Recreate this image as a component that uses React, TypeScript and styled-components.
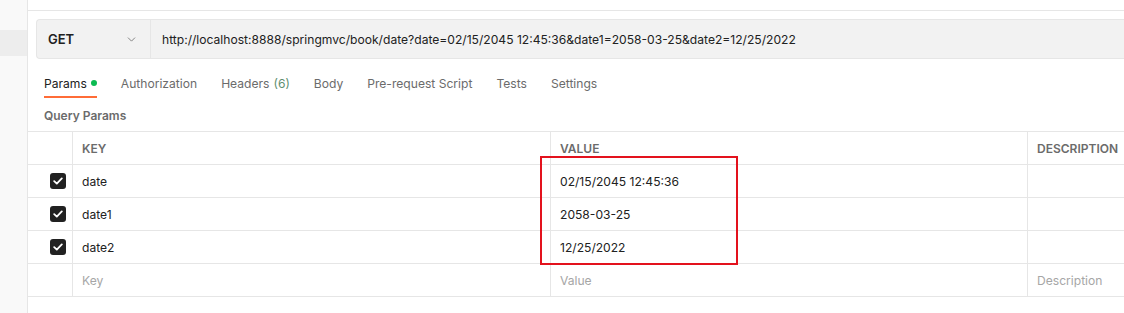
import React from 'react';
import styled, { createGlobalStyle } from 'styled-components';
import { ChevronDown } from 'lucide-react';

const GlobalStyle = createGlobalStyle`
  html, body {
    margin: 0;
    padding: 0;
    background: #fff;
  }
  body {
    font-family: Inter, "Noto Sans", "Liberation Sans", sans-serif;
    font-size: 13px;
    color: #212121;
    overflow: hidden;
  }
`;

const Page = styled.div`
  display: flex;
  width: 1124px;
  height: 313px;
  overflow: hidden;
`;

const Sidebar = styled.div`
  width: 27px;
  flex-shrink: 0;
  background: #f9f9f9;
  border-right: 1px solid #e6e6e6;
  padding-top: 30px;
  box-sizing: content-box;
`;

const SidebarItem = styled.div<{ $active?: boolean }>`
  height: 26px;
  background: ${p => (p.$active ? '#ededed' : 'transparent')};
`;

const Main = styled.div`
  flex: 1;
  min-width: 0;
  position: relative;
`;

const TopStrip = styled.div`
  height: 10px;
  border-bottom: 1px solid #e6e6e6;
`;

const UrlBar = styled.div`
  display: flex;
  height: 38px;
  margin: 8px 0 0 8px;
  background: #f2f2f2;
  border: 1px solid #e6e6e6;
  border-right: none;
  border-radius: 4px 0 0 4px;
`;

const Method = styled.div`
  width: 114px;
  display: flex;
  align-items: center;
  justify-content: space-between;
  padding: 0 12px 0 11px;
  box-sizing: border-box;
  border-right: 1px solid #e6e6e6;
  font-weight: 600;
  font-size: 13px;
  color: #212121;
  svg {
    color: #6b6b6b;
  }
`;

const UrlText = styled.div`
  display: flex;
  align-items: center;
  padding-left: 11px;
  font-size: 12.1px;
  color: #212121;
  white-space: nowrap;
`;

const Tabs = styled.div`
  display: flex;
  gap: 24px;
  margin: 11px 0 0 16px;
`;

const Tab = styled.div<{ $active?: boolean }>`
  display: flex;
  align-items: center;
  gap: 4px;
  height: 26px;
  font-size: 12.1px;
  color: ${p => (p.$active ? '#212121' : '#6b6b6b')};
  border-bottom: 2px solid ${p => (p.$active ? '#ff6c37' : 'transparent')};
`;

const Dot = styled.span`
  width: 6px;
  height: 6px;
  border-radius: 50%;
  background: #0cbb52;
`;

const Counter = styled.span`
  color: #5f8f6f;
`;

const SectionTitle = styled.div`
  margin: 10px 0 0 16px;
  height: 23px;
  font-size: 12px;
  font-weight: 600;
  color: #6b6b6b;
`;

const Table = styled.div`
  display: grid;
  grid-template-columns: 44px 478px 477px 1fr;
  border-top: 1px solid #e6e6e6;
`;

const Cell = styled.div<{ $head?: boolean; $placeholder?: boolean; $divider?: boolean }>`
  height: 32px;
  display: flex;
  align-items: center;
  padding-left: 9px;
  border-bottom: 1px solid #e6e6e6;
  border-left: ${p => (p.$divider ? '1px solid #e6e6e6' : 'none')};
  font-size: ${p => (p.$head ? '12px' : '12.1px')};
  font-weight: ${p => (p.$head ? 600 : 400)};
  color: ${p => (p.$head ? '#6b6b6b' : p.$placeholder ? '#a6a6a6' : '#212121')};
  white-space: nowrap;
  overflow: hidden;
`;

const CheckCell = styled.div`
  height: 32px;
  display: flex;
  align-items: center;
  justify-content: flex-end;
  padding-right: 6px;
  border-bottom: 1px solid #e6e6e6;
`;

const Checkbox = styled.span`
  width: 16px;
  height: 16px;
  border-radius: 3px;
  background: #212121;
  display: flex;
  align-items: center;
  justify-content: center;
`;

const TableWrap = styled.div`
  position: relative;
`;

const Highlight = styled.div`
  position: absolute;
  left: 512px;
  top: 25px;
  width: 194px;
  height: 105px;
  border: 2px solid #e3121d;
  pointer-events: none;
`;

const rows = [
  { key: 'date', value: '02/15/2045 12:45:36' },
  { key: 'date1', value: '2058-03-25' },
  { key: 'date2', value: '12/25/2022' },
];

const tabs = ['Authorization', 'Headers', 'Body', 'Pre-request Script', 'Tests', 'Settings'];

const Check = () => (
  <Checkbox>
    <svg width="10" height="8" viewBox="0 0 10 8" fill="none">
      <path d="M1.2 4.2 L3.8 6.6 L8.8 1.4" stroke="#fff" strokeWidth="1.8" strokeLinecap="round" strokeLinejoin="round" />
    </svg>
  </Checkbox>
);

export default function App() {
  return (
    <>
      <GlobalStyle />
      <Page>
        <Sidebar>
          <SidebarItem $active />
        </Sidebar>
        <Main>
          <TopStrip />
          <UrlBar>
            <Method>
              GET
              <ChevronDown size={13} strokeWidth={1.5} />
            </Method>
            <UrlText>
              http://localhost:8888/springmvc/book/date?date=02/15/2045 12:45:36&amp;date1=2058-03-25&amp;date2=12/25/2022
            </UrlText>
          </UrlBar>
          <Tabs>
            <Tab $active>
              Params <Dot />
            </Tab>
            {tabs.map(t => (
              <Tab key={t}>
                {t === 'Headers' ? (
                  <>
                    Headers <Counter>(6)</Counter>
                  </>
                ) : (
                  t
                )}
              </Tab>
            ))}
          </Tabs>
          <SectionTitle>Query Params</SectionTitle>
          <TableWrap>
            <Table>
              <CheckCell />
              <Cell $head $divider>KEY</Cell>
              <Cell $head $divider>VALUE</Cell>
              <Cell $head $divider>DESCRIPTION</Cell>
              {rows.map(r => (
                <React.Fragment key={r.key}>
                  <CheckCell>
                    <Check />
                  </CheckCell>
                  <Cell $divider>{r.key}</Cell>
                  <Cell $divider>{r.value}</Cell>
                  <Cell $divider />
                </React.Fragment>
              ))}
              <CheckCell />
              <Cell $divider $placeholder>Key</Cell>
              <Cell $divider $placeholder>Value</Cell>
              <Cell $divider $placeholder>Description</Cell>
            </Table>
            <Highlight />
          </TableWrap>
        </Main>
      </Page>
    </>
  );
}
